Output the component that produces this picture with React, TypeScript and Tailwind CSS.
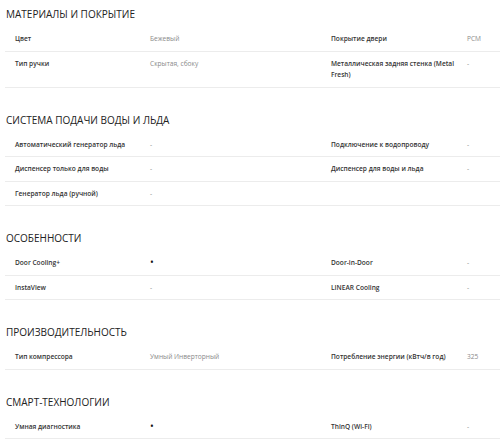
import React from 'react';

type Row = [string, string, string?, string?];

const sections: { title: string; rows: Row[] }[] = [
  {
    title: 'Материалы и покрытие',
    rows: [
      ['Цвет', 'Бежевый', 'Покрытие двери', 'PCM'],
      ['Тип ручки', 'Скрытая, сбоку', 'Металлическая задняя стенка (Metal Fresh)', '-'],
    ],
  },
  {
    title: 'Система подачи воды и льда',
    rows: [
      ['Автоматический генератор льда', '-', 'Подключение к водопроводу', '-'],
      ['Диспенсер только для воды', '-', 'Диспенсер для воды и льда', '-'],
      ['Генератор льда (ручной)', '-'],
    ],
  },
  {
    title: 'Особенности',
    rows: [
      ['Door Cooling+', '•', 'Door-in-Door', '-'],
      ['InstaView', '-', 'LINEAR Cooling', '-'],
    ],
  },
  {
    title: 'Производительность',
    rows: [['Тип компрессора', 'Умный Инверторный', 'Потребление энергии (кВтч/в год)', '325']],
  },
  {
    title: 'Смарт-технологии',
    rows: [['Умная диагностика', '•', 'ThinQ (Wi-Fi)', '-']],
  },
];

function Value({ text }: { text?: string }) {
  if (text === undefined) return <div />;
  if (text === '•') return <div className="pr-[10px] text-[10px] leading-[11.5px] text-[#111]">•</div>;
  return <div className="pr-[10px] text-[#8a8a8a]">{text}</div>;
}

export default function App() {
  return (
    <div className="w-[500px] overflow-hidden bg-white pl-[5px] pt-[7px] font-['Open_Sans',sans-serif]">
      {sections.map((section) => (
        <section key={section.title} className="mb-[25px]">
          <h2 className="mb-[6px] pl-px text-[10px] font-medium uppercase leading-[14px] text-[#222]">
            {section.title}
          </h2>
          <div>
            {section.rows.map((row) => (
              <div
                key={row[0]}
                className="grid grid-cols-[135px_181px_136px_1fr] border-b border-[#ececec] py-[6px] pl-[10px] text-[6.6px] leading-[11.5px]"
              >
                <div className="pr-[10px] font-semibold text-[#333]">{row[0]}</div>
                <Value text={row[1]} />
                <div className="pr-[10px] font-semibold text-[#333]">{row[2] ?? ''}</div>
                <Value text={row[3]} />
              </div>
            ))}
          </div>
        </section>
      ))}
    </div>
  );
}
